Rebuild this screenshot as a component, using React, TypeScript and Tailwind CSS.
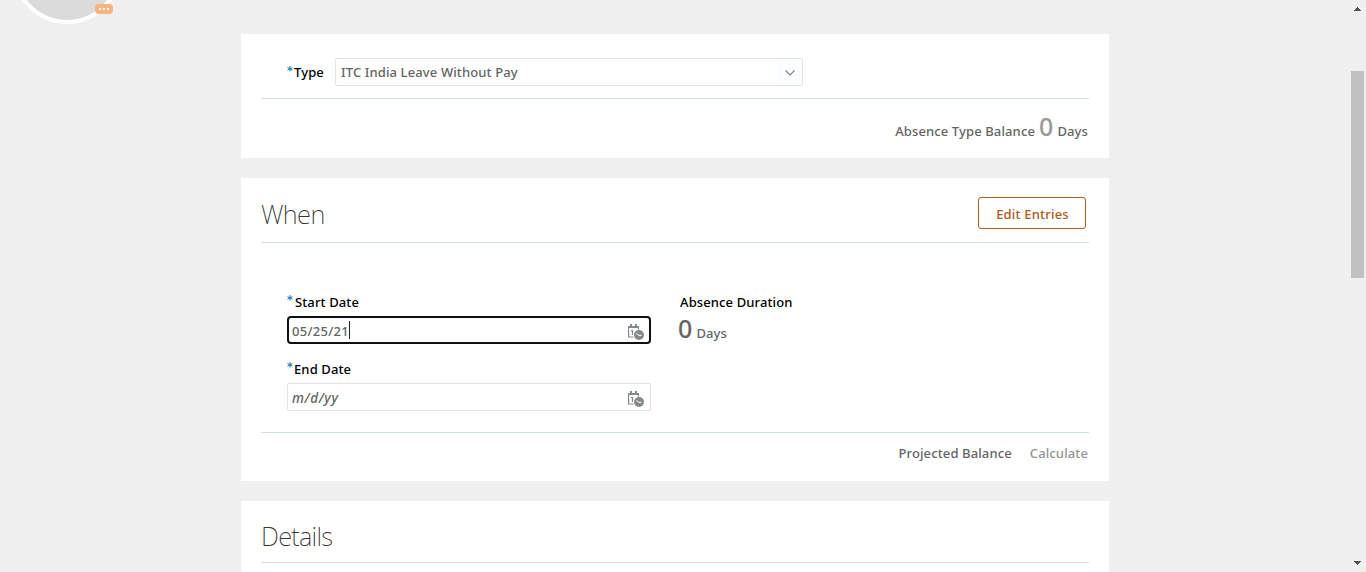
import type { ReactNode } from "react";

function Text({ className, children }: { className: string; children: ReactNode }) {
  return <span className={`block shrink-0 whitespace-nowrap ${className}`}>{children}</span>;
}

function Asterisk() {
  return (
    <svg className="block shrink-0" width="6" height="6" viewBox="0 0 6 6" stroke="#1b76b5" strokeWidth="1" fill="none">
      <path d="M3 0v5.5M0.5 1.6l5 2.5M5.5 1.6l-5 2.5" />
    </svg>
  );
}

function CalendarClock() {
  return (
    <svg className="block shrink-0" width="17" height="17" viewBox="0 0 17 17">
      <path d="M0.6 2v11H5.5M10.4 2v4" fill="none" stroke="#84898b" strokeWidth="1.2" />
      <path d="M0 2h11v2H0zM2 0h2v3H2zM7 0h2v3H7z" fill="#84898b" />
      <path d="M3 6.6h1.5V11" fill="none" stroke="#84898b" strokeWidth="1.3" />
      <circle cx="11" cy="11" r="5.5" fill="#fff" />
      <circle cx="11" cy="11" r="5" fill="#84898b" />
      <path d="M8.3 9.6l2.7 1.8h2.6" fill="none" stroke="#fff" strokeWidth="1" />
    </svg>
  );
}

export default function App() {
  return (
    <div className="flex h-[572px] w-full overflow-hidden bg-[#f0f0f0] font-['Noto_Sans','Open_Sans',sans-serif] text-[13px] font-medium tracking-[0.12px] text-[#646464]">
      <div className="flex min-w-0 flex-1 flex-col">
        <header className="relative h-[34px] shrink-0">
          <div className="absolute -top-[84px] left-[13px] size-[108px] rounded-full border-4 border-white bg-[#dbdbdb]" />
          <div className="absolute top-1 left-[95px] flex h-[10px] w-[18px] items-center justify-center gap-[2px] rounded-[4px] bg-[#f8b47f]">
            <i className="size-[2px] bg-white" />
            <i className="size-[2px] bg-white" />
            <i className="size-[2px] bg-white" />
          </div>
        </header>

        <main className="ml-[241px] flex w-[868px] flex-col gap-5">
          <section className="flex h-[124px] shrink-0 flex-col bg-white px-5">
            <div className="flex h-[65px] border-b border-[#d5dfe6] pt-6 pl-[26px]">
              <div className="flex h-7 w-12 items-center">
                <div className="-mt-[6px]"><Asterisk /></div>
                <Text className="ml-px text-black leading-7">Type</Text>
              </div>
              <div className="flex h-7 w-[468px] items-center justify-between rounded-[2px] border border-[#dfe4e7] pl-[5px]">
                <Text className="leading-[26px]">ITC India Leave Without Pay</Text>
                <div className="flex h-full w-6 items-center justify-center bg-[#fbfdfe]">
                  <svg className="mt-px" width="10" height="6" viewBox="0 0 10 6" fill="none" stroke="#808588" strokeWidth="1.2"><path d="M0.5 0.5L5 5l4.5-4.5" /></svg>
                </div>
              </div>
            </div>
            <div className="flex items-baseline justify-end gap-1 pt-[9px] pr-px leading-[36px]">
              <Text className="">Absence Type Balance</Text>
              <Text className="text-[25px] text-[#999]">0</Text>
              <Text className="">Days</Text>
            </div>
          </section>

          <section className="flex h-[303px] shrink-0 flex-col bg-white px-5">
            <div className="flex h-[65px] shrink-0 justify-between border-b border-[#d5dfe6] pr-[3px]">
              <Text className="pt-[18px] text-[25.5px] leading-9 font-extralight tracking-[-0.6px] text-[#333]">When</Text>
              <button className="mt-[19px] h-8 w-[108px] rounded-[3px] border border-[#ad5b21] pt-[3px] pl-px tracking-[0.2px] text-[#ad5b21]">Edit Entries</button>
            </div>
            <div className="flex h-[190px] shrink-0 border-b border-[#d5dfe6] pt-[49px] pl-[26px]">
              <div className="w-[364px]">
                <div className="flex h-6 text-black">
                  <div className="pt-[3px]"><Asterisk /></div>
                  <Text className="ml-[2px] leading-5">Start Date</Text>
                </div>
                <div className="flex h-7 items-center justify-between rounded-[4px] border-2 border-[#101010] pr-1 pl-[3px]">
                  <div className="flex items-center"><Text className="pt-px leading-6 tracking-[0.3px]">05/25/21</Text><i className="h-[18px] w-px bg-[#222]" /></div>
                  <div className="pt-[5px]"><CalendarClock /></div>
                </div>
                <div className="mt-[15px] flex h-6 text-black">
                  <div className="pt-[3px]"><Asterisk /></div>
                  <Text className="ml-px leading-5">End Date</Text>
                </div>
                <div className="flex h-7 items-center justify-between rounded-[2px] border border-[#dfe4e7] pr-[5px] pl-1">
                  <Text className="pt-[2px] text-[13.5px] tracking-[0.6px] italic">m/d/yy</Text>
                  <div className="pt-[5px]"><CalendarClock /></div>
                </div>
              </div>
              <div className="ml-7 flex flex-col">
                <Text className="pl-px leading-5 text-black">Absence Duration</Text>
                <div className="-mt-px flex items-baseline gap-1 leading-[34px]">
                  <Text className="-ml-px text-[25px]">0</Text>
                  <Text className="">Days</Text>
                </div>
              </div>
            </div>
            <div className="flex justify-end gap-[18px] pt-[10px] pr-px leading-5">
              <Text className="">Projected Balance</Text>
              <Text className="text-[#949494]">Calculate</Text>
            </div>
          </section>

          <section className="h-[71px] shrink-0 bg-white px-5">
            <div className="h-[62px] border-b border-[#d5dfe6]">
              <Text className="pt-[17px] text-[25.5px] leading-9 font-extralight tracking-[-0.7px] text-[#333]">Details</Text>
            </div>
          </section>
        </main>
      </div>
      <div className="flex w-[15px] flex-col items-start">
        <svg className="mt-[7px] ml-[3px] block shrink-0" width="7" height="4" viewBox="0 0 7 4" shapeRendering="crispEdges"><path d="M3 0h1v1h1v1h1v1h1v1H0V3h1V2h1V1h1z" fill="#505050" /></svg>
        <div className="mt-[60px] h-[207px] w-[13px] shrink-0 bg-[#c1c1c1]" />
        <svg className="mt-auto mb-[7px] ml-[3px] block shrink-0" width="7" height="4" viewBox="0 0 7 4" shapeRendering="crispEdges"><path d="M0 0h7v1H6v1H5v1H4v1H3V3H2V2H1V1H0z" fill="#505050" /></svg>
      </div>
    </div>
  );
}
